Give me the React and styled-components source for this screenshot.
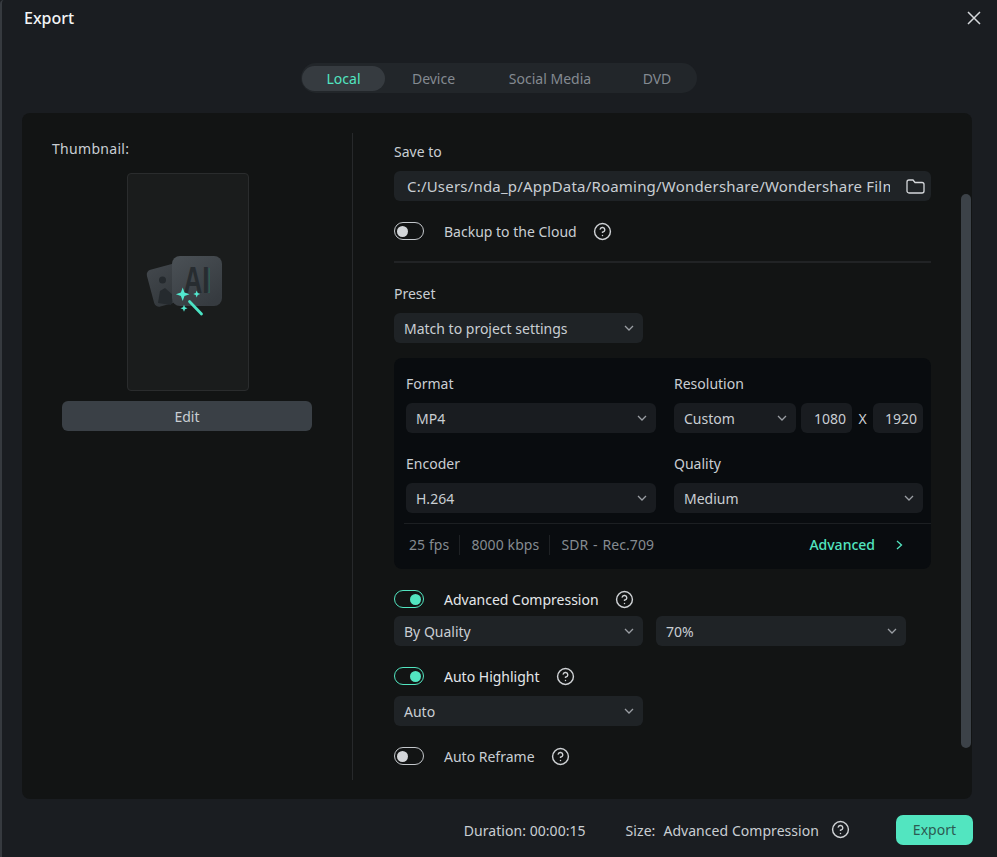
import React from 'react';
import styled, { createGlobalStyle } from 'styled-components';
import { CircleHelp } from 'lucide-react';

const GlobalStyle = createGlobalStyle`
  html, body {
    margin: 0;
    padding: 0;
    background: #1a1d21;
  }

  * {
    box-sizing: border-box;
  }
`;

const Window = styled.div`
  width: 997px;
  height: 857px;
  overflow: hidden;
  display: flex;
  flex-direction: column;
  padding-left: 20px;
  background: #1a1d21;
  border-left: 2px solid #363a3f;
  border-top-left-radius: 4px;
  font-family: 'Noto Sans', 'Open Sans', sans-serif;
  font-size: 14px;
  line-height: 20px;
  color: #c9ced3;
`;

const Header = styled.div`
  height: 36px;
  display: flex;
  align-items: center;
  justify-content: space-between;
  padding: 0 16px 0 2px;
`;

const Title = styled.div`
  font-size: 16px;
  font-weight: 500;
  color: #f2f4f5;
`;

const Tabs = styled.div`
  align-self: flex-start;
  margin: 27px 0 0 279px;
  width: 396px;
  height: 30px;
  display: flex;
  align-items: center;
  padding: 0 1px;
  border-radius: 15px;
  background: #22262a;
`;

const Tab = styled.div`
  height: 25px;
  display: flex;
  align-items: center;
  justify-content: center;
  padding-top: 1px;
  width: ${(p) => p.$width}px;
  border-radius: 13px;
  color: ${(p) => (p.$active ? '#52e5c0' : '#848a91')};
  background: ${(p) => (p.$active ? '#363b40' : 'transparent')};
`;

const Panel = styled.div`
  position: relative;
  margin-top: 20px;
  width: 950px;
  height: 686px;
  display: flex;
  padding-top: 20px;
  border-radius: 8px;
  background: #121414;
`;

const LeftColumn = styled.div`
  width: 331px;
  height: 647px;
  flex-shrink: 0;
  display: flex;
  flex-direction: column;
  border-right: 1px solid #27292b;
`;

const ThumbLabel = styled.div`
  margin: 6px 0 0 30px;
  letter-spacing: 0.3px;
`;

const Thumb = styled.div`
  margin: 14px 0 0 105px;
  width: 122px;
  height: 218px;
  border: 1px solid #2a2c2d;
  border-radius: 4px;
  background: #1a1c1c;
`;

const EditButton = styled.div`
  margin: 10px 0 0 40px;
  width: 250px;
  height: 30px;
  display: flex;
  align-items: center;
  justify-content: center;
  padding-top: 1px;
  border-radius: 6px;
  background: #3a4046;
  color: #c9ced3;
`;

const RightColumn = styled.div`
  width: 537px;
  margin-left: 41px;
  padding-top: 9px;
  display: flex;
  flex-direction: column;
  align-items: flex-start;
`;

const Label = styled.div`
  height: 20px;
  margin-top: ${(p) => p.$top || 0}px;
`;

const PathField = styled.div`
  margin-top: 9px;
  width: 537px;
  height: 30px;
  display: flex;
  align-items: center;
  padding: 0 6px 0 13px;
  border-radius: 6px;
  background: #1f2326;
`;

const PathText = styled.div`
  flex: 1;
  overflow: hidden;
  white-space: nowrap;
  margin-right: 16px;
  font-size: 15px;
  letter-spacing: 0.2px;
`;

const ToggleRow = styled.div`
  margin-top: 21px;
  height: 18px;
  display: flex;
  align-items: center;
`;

const ToggleText = styled.div`
  padding-top: 2px;
  color: ${(p) => (p.$on ? '#e4e7ea' : '#c9ced3')};
`;

const Toggle = styled.div`
  width: 30px;
  height: 18px;
  display: flex;
  align-items: center;
  justify-content: ${(p) => (p.$on ? 'flex-end' : 'flex-start')};
  padding: 0 2px;
  border: 1.5px solid ${(p) => (p.$on ? '#52e5c0' : '#c4c8cc')};
  border-radius: 9px;
  margin-right: 20px;
`;

const Knob = styled.div`
  width: 11px;
  height: 11px;
  border-radius: 50%;
  background: ${(p) => (p.$on ? '#52e5c0' : '#d3d6d9')};
`;

const HelpIcon = styled(CircleHelp)`
  margin-left: ${(p) => p.$left || 16}px;
  flex-shrink: 0;
  color: #cfd2d5;
`;

const Rule = styled.div`
  margin-top: 21px;
  width: 537px;
  height: 2px;
  background: #212325;
`;

const SelectBox = styled.div`
  margin-top: ${(p) => p.$top || 0}px;
  width: ${(p) => p.$width || 249}px;
  height: 30px;
  flex-shrink: 0;
  display: flex;
  align-items: center;
  justify-content: space-between;
  padding: 0 9px 0 10px;
  border-radius: 6px;
  background: ${(p) => (p.$dark ? '#191c20' : '#1f2326')};
`;

const SelectText = styled.div`
  padding-top: 2px;
`;

const FormatPanel = styled.div`
  margin-top: 15px;
  width: 537px;
  height: 211px;
  padding: 16px 8px 0 12px;
  border-radius: 8px;
  background: #090c0f;
`;

const FormatGrid = styled.div`
  display: grid;
  grid-template-columns: 250px 249px;
  column-gap: 18px;
`;

const FormatField = styled.div`
  display: flex;
  flex-direction: column;
  margin-bottom: ${(p) => (p.$last ? 0 : 21)}px;
`;

const FieldRow = styled.div`
  margin-top: 9px;
  display: flex;
  align-items: center;
`;

const NumberBox = styled.div`
  width: ${(p) => p.$width}px;
  height: 30px;
  margin-left: ${(p) => p.$left || 0}px;
  display: flex;
  align-items: center;
  justify-content: flex-end;
  padding: 1px 6px 0 0;
  border-radius: 6px;
  background: #191c20;
`;

const Times = styled.div`
  width: 21px;
  padding-top: 1px;
  text-align: center;
`;

const StatsBar = styled.div`
  margin: 10px -8px 0 -2px;
  height: 43px;
  padding: 0 28px 1px 5px;
  display: flex;
  align-items: center;
  border-top: 1px solid #1c1f22;
  color: #858b91;
`;

const Stat = styled.div`
  padding-right: 11px;
  margin-right: 11px;
  position: relative;
  letter-spacing: 0.1px;

  &:nth-child(3) {
    word-spacing: 1px;
  }

  &:not(:nth-child(3))::after {
    content: '';
    position: absolute;
    right: 0;
    top: 0;
    bottom: 0;
    width: 1px;
    background: #1e2124;
  }
`;

const AdvancedLink = styled.div`
  margin-left: auto;
  display: flex;
  align-items: center;
  gap: 21px;
  color: #52e5c0;
  font-weight: 500;
`;

const SelectPair = styled.div`
  margin-top: ${(p) => p.$top}px;
  display: flex;
  gap: 13px;
`;

const ScrollThumb = styled.div`
  position: absolute;
  top: 81px;
  right: 1px;
  width: 10px;
  height: 554px;
  border-radius: 5px;
  background: #3c4248;
`;

const Footer = styled.div`
  flex: 1;
  display: flex;
  align-items: center;
  justify-content: flex-end;
  padding-top: 3px;
  width: 951px;
  letter-spacing: 0.05px;
  color: #c9ced3;
`;

const FooterText = styled.div`
  padding-top: 2px;
  margin-right: ${(p) => p.$right || 0}px;
`;

const ExportButton = styled.div`
  margin-left: 46px;
  width: 77px;
  height: 30px;
  display: flex;
  align-items: center;
  justify-content: center;
  border-radius: 7px;
  background: #52e5c0;
  color: #2c5a52;
`;

const Chevron = ({ color = '#9a9ea3' }) => (
  <svg width="10" height="6" viewBox="0 0 10 6" fill="none">
    <path d="M1 1l4 4 4-4" stroke={color} strokeWidth="1.3" />
  </svg>
);

const Select = ({ children, ...rest }) => (
  <SelectBox {...rest}>
    <SelectText>{children}</SelectText>
    <Chevron />
  </SelectBox>
);

const Help = ({ left }) => <HelpIcon size={19} strokeWidth={1.8} $left={left} />;

const ToggleLine = ({ on, children }) => (
  <ToggleRow>
    <Toggle $on={on}>
      <Knob $on={on} />
    </Toggle>
    <ToggleText $on={on}>{children}</ToggleText>
    <Help />
  </ToggleRow>
);

const AiBadge = () => (
  <svg width="120" height="216" viewBox="128 174 120 216">
    <defs>
      <linearGradient id="front" x1="0" y1="0" x2="0.7" y2="1">
        <stop offset="0" stopColor="#4b5156" />
        <stop offset="1" stopColor="#363b40" />
      </linearGradient>
      <linearGradient id="back" x1="0" y1="0" x2="0.4" y2="1">
        <stop offset="0" stopColor="#42474c" />
        <stop offset="1" stopColor="#33383c" />
      </linearGradient>
    </defs>
    <rect x="150" y="266" width="34" height="38" rx="5" fill="url(#back)" transform="rotate(-15 167 285)" />
    <circle cx="162.5" cy="280" r="3.5" fill="#252a2e" />
    <path d="M158 303l2-12 5-3 9 8-3 9z" fill="#252a2e" />
    <rect x="172" y="256" width="50" height="50" rx="8" fill="url(#front)" />
    <path d="M208.500 268h1.500v25h-6v-1h4.500z" fill="#2f5a50" />
    <text
      x="183.500"
      y="293"
      fontFamily="Liberation Sans, sans-serif"
      fontSize="36"
      fontWeight="700"
      fill="#272c30"
      textLength="26"
      lengthAdjust="spacingAndGlyphs"
    >
      AI
    </text>
    <path d="M182.700 287.500l1.800 5 5 1.800-5 1.800-1.800 5-1.800-5-5-1.800 5-1.800z" fill="#52e8cf" />
    <path d="M196.700 290.500l1 2.500 2.500 1-2.500 1-1 2.500-1-2.500-2.500-1 2.500-1z" fill="#52e8cf" />
    <path d="M184 304.800l1 2.500 2.500 1-2.500 1-1 2.500-1-2.500-2.500-1 2.500-1z" fill="#52e8cf" />
    <path d="M189.500 301.500l12 12.500" stroke="#4be3c4" strokeWidth="2.800" strokeLinecap="round" />
  </svg>
);

export default function App() {
  return (
    <Window>
      <GlobalStyle />
      <Header>
        <Title>Export</Title>
        <svg width="14" height="14" viewBox="0 0 14 14" fill="none">
          <path d="M1 1l12 12M13 1L1 13" stroke="#d5d8db" strokeWidth="1.500" />
        </svg>
      </Header>
      <Tabs>
        <Tab $active $width={83}>
          Local
        </Tab>
        <Tab $width={97}>Device</Tab>
        <Tab $width={136}>Social Media</Tab>
        <Tab $width={78}>DVD</Tab>
      </Tabs>
      <Panel>
        <LeftColumn>
          <ThumbLabel>Thumbnail:</ThumbLabel>
          <Thumb>
            <AiBadge />
          </Thumb>
          <EditButton>Edit</EditButton>
        </LeftColumn>
        <RightColumn>
          <Label>Save to</Label>
          <PathField>
            <PathText>C:/Users/nda_p/AppData/Roaming/Wondershare/Wondershare Filmora/Output</PathText>
            <svg width="19" height="15" viewBox="0 0 19 15" fill="none">
              <path
                d="M1 3a2 2 0 0 1 2-2h4l2 2.500h7a2 2 0 0 1 2 2V12a2 2 0 0 1-2 2H3a2 2 0 0 1-2-2z"
                stroke="#d5d8db"
                strokeWidth="1.300"
              />
            </svg>
          </PathField>
          <ToggleLine>Backup to the Cloud</ToggleLine>
          <Rule />
          <Label $top={21}>Preset</Label>
          <Select $top={9}>Match to project settings</Select>
          <FormatPanel>
            <FormatGrid>
              <FormatField>
                <Label>Format</Label>
                <Select $top={9} $dark $width={250}>
                  MP4
                </Select>
              </FormatField>
              <FormatField>
                <Label>Resolution</Label>
                <FieldRow>
                  <Select $dark $width={122}>
                    Custom
                  </Select>
                  <NumberBox $width={51} $left={5}>
                    1080
                  </NumberBox>
                  <Times>X</Times>
                  <NumberBox $width={50}>1920</NumberBox>
                </FieldRow>
              </FormatField>
              <FormatField $last>
                <Label>Encoder</Label>
                <Select $top={9} $dark $width={250}>
                  H.264
                </Select>
              </FormatField>
              <FormatField $last>
                <Label>Quality</Label>
                <Select $top={9} $dark>
                  Medium
                </Select>
              </FormatField>
            </FormatGrid>
            <StatsBar>
              <Stat>25 fps</Stat>
              <Stat>8000 kbps</Stat>
              <Stat>SDR - Rec.709</Stat>
              <AdvancedLink>
                Advanced
                <svg width="7" height="10" viewBox="0 0 7 10" fill="none">
                  <path d="M1 1l4.500 4L1 9" stroke="#52e5c0" strokeWidth="1.300" />
                </svg>
              </AdvancedLink>
            </StatsBar>
          </FormatPanel>
          <ToggleLine on>Advanced Compression</ToggleLine>
          <SelectPair $top={8}>
            <Select>By Quality</Select>
            <Select $width={250}>70%</Select>
          </SelectPair>
          <ToggleLine on>Auto Highlight</ToggleLine>
          <Select $top={11}>Auto</Select>
          <ToggleLine>Auto Reframe</ToggleLine>
        </RightColumn>
        <ScrollThumb />
      </Panel>
      <Footer>
        <FooterText $right={40}>Duration: 00:00:15</FooterText>
        <FooterText $right={8}>Size:</FooterText>
        <FooterText>Advanced Compression</FooterText>
        <Help left={12} />
        <ExportButton>Export</ExportButton>
      </Footer>
    </Window>
  );
}
